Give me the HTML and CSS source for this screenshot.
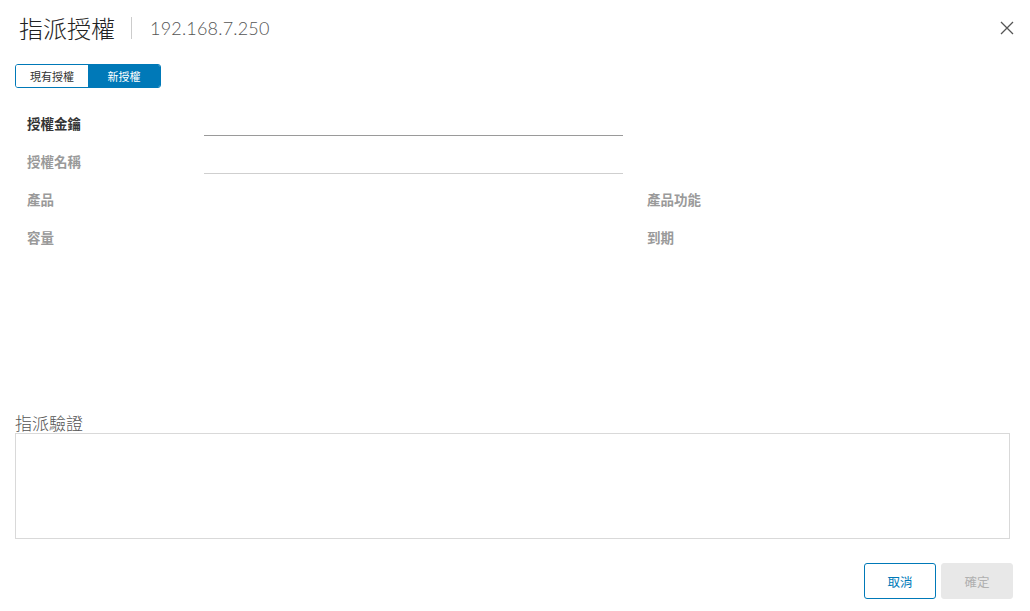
FILE: index.html
```html
<!DOCTYPE html>
<html lang="zh-Hant">
<head>
    <meta charset="UTF-8">
    <meta name="viewport" content="width=device-width, initial-scale=1.0">
    <title>指派授權</title>
    <link rel="stylesheet" href="styles.css">
</head>
<body>
    <div class="modal">
        <div class="modal-header">
            <h3 class="modal-title">指派授權</h3>
            <span class="title-divider"></span>
            <span class="host">192.168.7.250</span>
            <button class="close-btn" aria-label="關閉">
                <svg width="14" height="14" viewBox="0 0 14 14">
                    <path d="M1 1 L13 13 M13 1 L1 13" stroke="#555" stroke-width="1.3" fill="none"/>
                </svg>
            </button>
        </div>

        <div class="segmented">
            <button class="seg-btn">現有授權</button>
            <button class="seg-btn active">新授權</button>
        </div>

        <div class="form-grid">
            <label class="form-label strong">授權金鑰</label>
            <div class="input-cell"><input class="line-input" type="text"></div>
            <span></span>

            <label class="form-label">授權名稱</label>
            <div class="input-cell"><input class="line-input disabled" type="text" disabled></div>
            <span></span>

            <label class="form-label">產品</label>
            <span></span>
            <label class="form-label side">產品功能</label>

            <label class="form-label">容量</label>
            <span></span>
            <label class="form-label side">到期</label>
        </div>

        <div class="assign-section">
            <div class="section-title">指派驗證</div>
            <div class="validation-box"></div>
        </div>

        <div class="modal-footer">
            <button class="btn btn-outline">取消</button>
            <button class="btn btn-disabled" disabled>確定</button>
        </div>
    </div>
</body>
</html>
```

FILE: styles.css
```css
body {
    margin: 0;
    padding: 0;
    background: #fff;
    font-family: "Noto Sans CJK TC", "Noto Sans", sans-serif;
    color: #333;
}
.modal {
    width: 1030px;
    height: 611px;
    box-sizing: border-box;
    padding: 0 17px 0 15px;
}
.modal-header {
    display: flex;
    align-items: center;
    height: 56px;
    padding-left: 4px;
}
.modal-title {
    margin: 0;
    font-size: 24px;
    font-weight: 300;
    color: #222;
    line-height: 1;
}
.title-divider {
    width: 1px;
    height: 22px;
    background: #ccc;
    margin: 0 18px 0 16px;
}
.host {
    font-family: Lato, "Noto Sans", sans-serif;
    font-size: 18px;
    font-weight: 300;
    color: #555;
    letter-spacing: 0.2px;
}
.close-btn {
    margin-left: auto;
    margin-right: -1px;
    border: none;
    background: none;
    padding: 0;
    cursor: pointer;
    display: flex;
}
.segmented {
    display: inline-flex;
    margin-top: 8px;
    border: 1px solid #0079b8;
    border-radius: 3px;
    overflow: hidden;
}
.seg-btn {
    width: 72px;
    height: 22px;
    border: none;
    background: #fff;
    color: #333;
    font-family: inherit;
    font-size: 11px;
    padding: 0;
    cursor: pointer;
}
.seg-btn.active {
    background: #0079b8;
    color: #fff;
}
.form-grid {
    display: grid;
    grid-template-columns: 177px 419px 1fr;
    grid-auto-rows: 38px;
    margin-top: 16px;
    padding-left: 12px;
    align-items: center;
}
.form-label {
    font-size: 13.5px;
    font-weight: bold;
    color: #9a9a9a;
}
.form-label.strong {
    color: #333;
}
.form-label.side {
    padding-left: 24px;
}
.input-cell {
    display: flex;
}
.line-input {
    width: 100%;
    height: 25px;
    box-sizing: border-box;
    border: none;
    border-bottom: 1px solid #9a9a9a;
    outline: none;
    background: transparent;
}
.line-input.disabled {
    border-bottom-color: #cfcfcf;
}
.assign-section {
    margin-top: 157px;
    margin-right: 3px;
}
.section-title {
    font-size: 17px;
    font-weight: 300;
    color: #555;
    line-height: 20px;
}
.validation-box {
    height: 104px;
    border: 1px solid #d9d9d9;
}
.modal-footer {
    display: flex;
    justify-content: flex-end;
    gap: 5px;
    margin-top: 24px;
}
.btn {
    width: 72px;
    height: 36px;
    border-radius: 3px;
    font-family: inherit;
    font-size: 12.5px;
    padding: 0;
}
.btn-outline {
    background: #fff;
    border: 1px solid #0079b8;
    color: #0079b8;
    cursor: pointer;
}
.btn-disabled {
    background: #e8e8e8;
    border: 1px solid #e8e8e8;
    color: #b0b0b0;
}
```
